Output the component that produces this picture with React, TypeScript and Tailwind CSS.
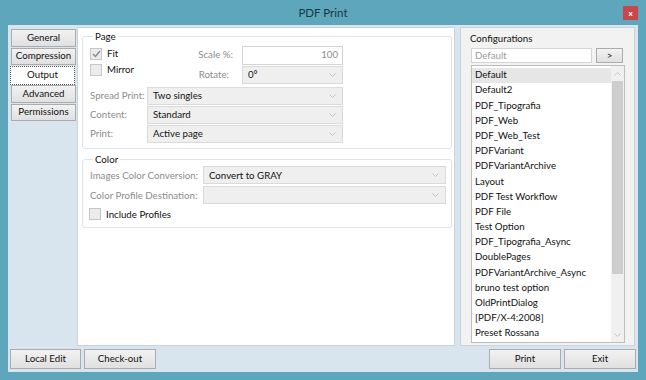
import React from 'react'

const configs = [
  'Default',
  'Default2',
  'PDF_Tipografia',
  'PDF_Web',
  'PDF_Web_Test',
  'PDFVariant',
  'PDFVariantArchive',
  'Layout',
  'PDF Test Workflow',
  'PDF File',
  'Test Option',
  'PDF_Tipografia_Async',
  'DoublePages',
  'PDFVariantArchive_Async',
  'bruno test option',
  'OldPrintDialog',
  '[PDF/X-4:2008]',
  'Preset Rossana',
]

const tabs = ['General', 'Compression', 'Output', 'Advanced', 'Permissions']

function Chevron({ up = false }: { up?: boolean }) {
  return (
    <svg width="7" height="4" viewBox="0 0 7 4" className={up ? 'rotate-180' : ''}>
      <polyline points="0.5,0.5 3.5,3.5 6.5,0.5" fill="none" stroke="#c4c4c4" strokeWidth="1" />
    </svg>
  )
}

function Btn({ label, className = '' }: { label: string; className?: string }) {
  return (
    <div
      className={`flex items-center justify-center border border-[#acacac] bg-gradient-to-b from-[#f2f2f2] to-[#e0e0e0] text-[#111] ${className}`}
    >
      {label}
    </div>
  )
}

function Select({ value, w }: { value?: string; w: string }) {
  return (
    <div
      className={`${w} h-[18px] flex items-center justify-between pl-[5px] pr-[6px] bg-[#efefef] border border-[#dadada] text-[#111]`}
    >
      <span>{value}</span>
      <Chevron />
    </div>
  )
}

function Check({ label, checked = false }: { label: string; checked?: boolean }) {
  return (
    <div className="flex items-center gap-[5px] h-[14px]">
      <div className="w-[12px] h-[12px] border border-[#c6c6c6] bg-[#ececec] flex items-center justify-center">
        {checked && (
          <svg width="9" height="8" viewBox="0 0 9 8">
            <polyline points="1,4 3.5,6.5 8,1" fill="none" stroke="#8a8a8a" strokeWidth="1.4" />
          </svg>
        )}
      </div>
      <span className="text-[#111]">{label}</span>
    </div>
  )
}

export default function App() {
  return (
    <div className="w-[646px] h-[380px] bg-[#5ea6bb] flex flex-col font-[Lato,sans-serif] text-[9.7px] leading-none">
      <div className="h-[25px] relative flex items-center justify-center">
        <span className="text-[11.5px] text-[#183644]">PDF Print</span>
        <div className="absolute right-[8px] top-[6px] w-[15px] h-[14px] bg-[#c8474a] flex items-center justify-center text-white text-[8px] font-bold">
          x
        </div>
      </div>

      <div className="mx-[8px] mb-[8px] flex-1 bg-[#d9e5ee] flex flex-col px-[2px] pt-[2px]">
        <div className="flex h-[319px]">
          <div className="w-[67px] pt-[2px] flex flex-col gap-[1px]">
            {tabs.map((t) =>
              t === 'Output' ? (
                <div
                  key={t}
                  className="w-[65px] h-[19px] -my-[0.5px] flex items-center justify-center bg-white border border-dotted border-[#555] text-[#111]"
                >
                  {t}
                </div>
              ) : (
                <Btn key={t} label={t} className="ml-[1px] w-[65px] h-[17.5px]" />
              )
            )}
          </div>

          <div className="w-[378px] bg-white border border-[#c9d3db] px-[4px] pt-[4px]">
            <fieldset className="border border-[#dde3e8] rounded-[3px] pl-[7px] pb-[5px] w-[370px]">
              <legend className="ml-[3px] px-[2px] text-[#111]">Page</legend>
              <div className="flex mt-[4px]">
                <div className="w-[57px] flex flex-col gap-[2px] pt-[1px]">
                  <Check label="Fit" checked />
                  <Check label="Mirror" />
                </div>
                <div className="flex flex-col gap-[1px]">
                  <div className="flex items-center">
                    <span className="w-[95px] pr-[9px] text-right text-[#8c8c8c]">Scale %:</span>
                    <div className="w-[101px] h-[19px] border border-[#d4d4d4] bg-white flex items-center justify-end pr-[4px] text-[#8c8c8c]">
                      100
                    </div>
                  </div>
                  <div className="flex items-center">
                    <span className="w-[95px] pr-[13px] text-right text-[#8c8c8c]">Rotate:</span>
                    <Select value="0°" w="w-[101px]" />
                  </div>
                </div>
              </div>
              <div className="flex flex-col gap-[1px] mt-[3px]">
                {[
                  ['Spread Print:', 'Two singles'],
                  ['Content:', 'Standard'],
                  ['Print:', 'Active page'],
                ].map(([l, v]) => (
                  <div key={l} className="flex items-center">
                    <span className="w-[57px] text-[#8c8c8c]">{l}</span>
                    <Select value={v} w="w-[196px]" />
                  </div>
                ))}
              </div>
            </fieldset>

            <fieldset className="mt-[6px] border border-[#dde3e8] rounded-[3px] pl-[7px] pb-[6px] w-[370px]">
              <legend className="ml-[3px] px-[2px] text-[#111]">Color</legend>
              <div className="flex flex-col gap-[2px] mt-[2px]">
                <div className="flex items-center">
                  <span className="w-[113px] text-[#8c8c8c]">Images Color Conversion:</span>
                  <Select value="Convert to GRAY" w="w-[243px]" />
                </div>
                <div className="flex items-center">
                  <span className="w-[113px] text-[#8c8c8c]">Color Profile Destination:</span>
                  <Select w="w-[243px]" />
                </div>
                <div className="mt-[1px] -ml-[1px]">
                  <Check label="Include Profiles" />
                </div>
              </div>
            </fieldset>
          </div>

          <div className="ml-[5px] w-[175px] bg-[#f2f2f2] border border-[#c9d3db] pl-[10px] pt-[6px]">
            <div className="-ml-[1px] h-[10px] text-[#111]">Configurations</div>
            <div className="flex gap-[4px] mt-[4px]">
              <div className="w-[121px] h-[15px] border border-[#d4d4d4] bg-white flex items-center pl-[3px] text-[#9a9a9a]">
                Default
              </div>
              <Btn label=">" className="w-[27px] h-[15px]" />
            </div>
            <div className="mt-[2px] w-[154px] h-[278px] border border-[#bdbdbd] bg-white flex">
              <div className="flex-1 pt-[1.5px]">
                {configs.map((c, i) => (
                  <div
                    key={c}
                    className={`h-[15.2px] flex items-center pl-[3px] text-[#111] ${i === 0 ? 'bg-[#e6e6e6]' : ''}`}
                  >
                    {c}
                  </div>
                ))}
              </div>
              <div className="w-[13px] bg-[#f0f0f0] flex flex-col items-center">
                <div className="h-[15px] flex items-center justify-center">
                  <Chevron up />
                </div>
                <div className="w-[11px] h-[193px] bg-[#cdcdcd]" />
                <div className="flex-1" />
                <div className="h-[15px] flex items-center justify-center">
                  <Chevron />
                </div>
              </div>
            </div>
          </div>
        </div>

        <div className="flex items-center mt-[3px]">
          <Btn label="Local Edit" className="w-[71px] h-[20px]" />
          <Btn label="Check-out" className="ml-[3px] w-[72px] h-[20px]" />
          <div className="flex-1" />
          <Btn label="Print" className="w-[72px] h-[20px]" />
          <Btn label="Exit" className="ml-[3px] w-[72px] h-[20px]" />
        </div>
      </div>
    </div>
  )
}
